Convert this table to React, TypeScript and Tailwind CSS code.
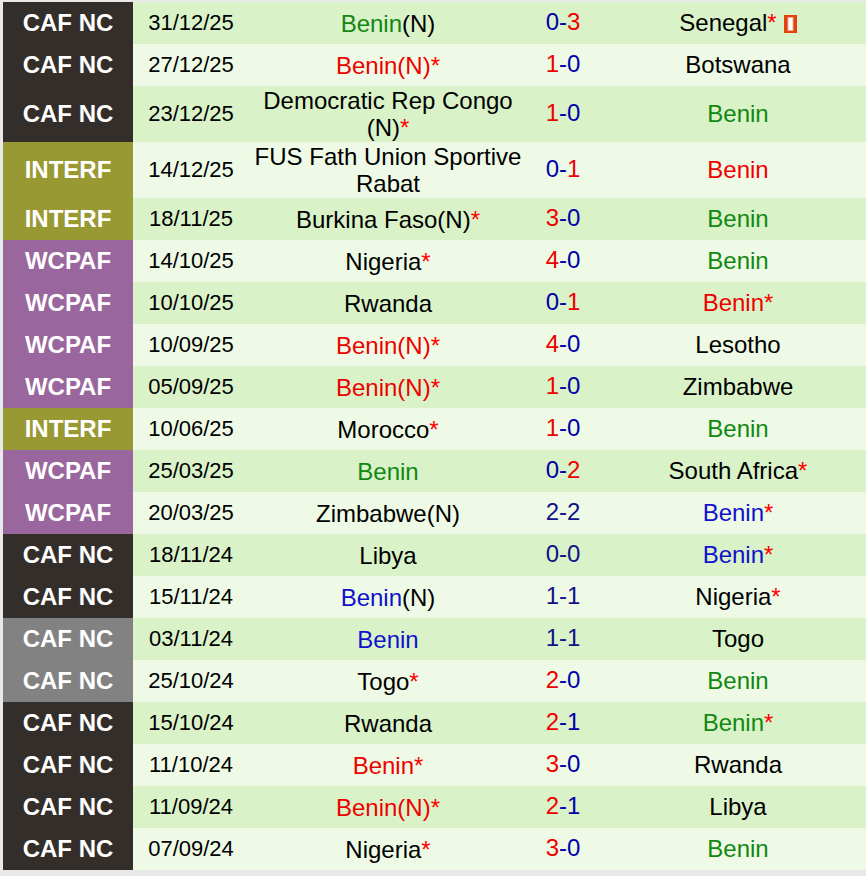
import React from 'react'

type Part = { t: string; c?: string }
type Row = {
  league: 'caf' | 'cafg' | 'interf' | 'wcpaf'
  date: string
  home: Part[]
  score: Part[]
  away: Part[]
  flag?: boolean
}

const G = 'text-[#118811]'
const R = 'text-[#ee0000]'
const B = 'text-[#1111cc]'
const S = 'text-[#ff0000]'
const SB = 'text-[#0000aa]'
const SR = 'text-[#ee0000]'
const SD = 'text-[#111188]'

const star: Part = { t: '*', c: S }

const leagues = {
  caf: { label: 'CAF NC', bg: 'bg-[#332e2a]' },
  cafg: { label: 'CAF NC', bg: 'bg-[#828282]' },
  interf: { label: 'INTERF', bg: 'bg-[#999933]' },
  wcpaf: { label: 'WCPAF', bg: 'bg-[#9a669e]' },
}

const rows: Row[] = [
  { league: 'caf', date: '31/12/25', home: [{ t: 'Benin', c: G }, { t: '(N)' }], score: [{ t: '0-', c: SB }, { t: '3', c: SR }], away: [{ t: 'Senegal' }, star], flag: true },
  { league: 'caf', date: '27/12/25', home: [{ t: 'Benin(N)', c: R }, star], score: [{ t: '1', c: SR }, { t: '-0', c: SB }], away: [{ t: 'Botswana' }] },
  { league: 'caf', date: '23/12/25', home: [{ t: 'Democratic Rep Congo (N)' }, star], score: [{ t: '1', c: SR }, { t: '-0', c: SB }], away: [{ t: 'Benin', c: G }] },
  { league: 'interf', date: '14/12/25', home: [{ t: 'FUS Fath Union Sportive Rabat' }], score: [{ t: '0-', c: SB }, { t: '1', c: SR }], away: [{ t: 'Benin', c: R }] },
  { league: 'interf', date: '18/11/25', home: [{ t: 'Burkina Faso(N)' }, star], score: [{ t: '3', c: SR }, { t: '-0', c: SB }], away: [{ t: 'Benin', c: G }] },
  { league: 'wcpaf', date: '14/10/25', home: [{ t: 'Nigeria' }, star], score: [{ t: '4', c: SR }, { t: '-0', c: SB }], away: [{ t: 'Benin', c: G }] },
  { league: 'wcpaf', date: '10/10/25', home: [{ t: 'Rwanda' }], score: [{ t: '0-', c: SB }, { t: '1', c: SR }], away: [{ t: 'Benin', c: R }, star] },
  { league: 'wcpaf', date: '10/09/25', home: [{ t: 'Benin(N)', c: R }, star], score: [{ t: '4', c: SR }, { t: '-0', c: SB }], away: [{ t: 'Lesotho' }] },
  { league: 'wcpaf', date: '05/09/25', home: [{ t: 'Benin(N)', c: R }, star], score: [{ t: '1', c: SR }, { t: '-0', c: SB }], away: [{ t: 'Zimbabwe' }] },
  { league: 'interf', date: '10/06/25', home: [{ t: 'Morocco' }, star], score: [{ t: '1', c: SR }, { t: '-0', c: SB }], away: [{ t: 'Benin', c: G }] },
  { league: 'wcpaf', date: '25/03/25', home: [{ t: 'Benin', c: G }], score: [{ t: '0-', c: SB }, { t: '2', c: SR }], away: [{ t: 'South Africa' }, star] },
  { league: 'wcpaf', date: '20/03/25', home: [{ t: 'Zimbabwe(N)' }], score: [{ t: '2-2', c: SD }], away: [{ t: 'Benin', c: B }, star] },
  { league: 'caf', date: '18/11/24', home: [{ t: 'Libya' }], score: [{ t: '0-0', c: SD }], away: [{ t: 'Benin', c: B }, star] },
  { league: 'caf', date: '15/11/24', home: [{ t: 'Benin', c: B }, { t: '(N)' }], score: [{ t: '1-1', c: SD }], away: [{ t: 'Nigeria' }, star] },
  { league: 'cafg', date: '03/11/24', home: [{ t: 'Benin', c: B }], score: [{ t: '1-1', c: SD }], away: [{ t: 'Togo' }] },
  { league: 'cafg', date: '25/10/24', home: [{ t: 'Togo' }, star], score: [{ t: '2', c: SR }, { t: '-0', c: SB }], away: [{ t: 'Benin', c: G }] },
  { league: 'caf', date: '15/10/24', home: [{ t: 'Rwanda' }], score: [{ t: '2', c: SR }, { t: '-1', c: SB }], away: [{ t: 'Benin', c: G }, star] },
  { league: 'caf', date: '11/10/24', home: [{ t: 'Benin', c: R }, star], score: [{ t: '3', c: SR }, { t: '-0', c: SB }], away: [{ t: 'Rwanda' }] },
  { league: 'caf', date: '11/09/24', home: [{ t: 'Benin(N)', c: R }, star], score: [{ t: '2', c: SR }, { t: '-1', c: SB }], away: [{ t: 'Libya' }] },
  { league: 'caf', date: '07/09/24', home: [{ t: 'Nigeria' }, star], score: [{ t: '3', c: SR }, { t: '-0', c: SB }], away: [{ t: 'Benin', c: G }] },
]

function Parts({ parts }: { parts: Part[] }) {
  return (
    <>
      {parts.map((p, i) => (
        <span key={i} className={p.c ?? 'text-black'}>
          {p.t}
        </span>
      ))}
    </>
  )
}

// small red-card style marker shown after the team name
function Flag() {
  return (
    <svg width="13" height="18" viewBox="0 0 13 18" className="ml-[7px] inline-block align-[-2px]">
      <rect x="0" y="0" width="13" height="18" fill="#e3400c" />
      <rect x="3.5" y="2" width="6" height="14" fill="#f6ad98" />
      <rect x="4.5" y="3" width="4" height="12" fill="#ffffff" />
    </svg>
  )
}

export default function App() {
  return (
    <div
      className="h-[876px] w-[866px] overflow-hidden bg-[#e9e9e9] pl-[3px] pt-[2px]"
      style={{ fontFamily: '"Liberation Sans", Arial, sans-serif' }}
    >
      <div className="flex w-[874px] flex-col">
        {rows.map((r, i) => {
          const lg = leagues[r.league]
          const rowBg = i % 2 === 0 ? 'bg-[#d9f2c8]' : 'bg-[#eefae5]'
          return (
            <div key={i} className={`flex min-h-[42px] ${rowBg}`}>
              <div className={`flex w-[130px] shrink-0 items-center justify-center pb-px text-[24px] font-bold text-white ${lg.bg}`}>
                {lg.label}
              </div>
              <div className="flex w-[116px] shrink-0 items-center justify-center pb-[2px] text-[22px] text-black">
                {r.date}
              </div>
              <div className="flex w-[278px] shrink-0 items-center justify-center px-1 py-px text-center text-[24px] leading-[27px]">
                <div>
                  <Parts parts={r.home} />
                </div>
              </div>
              <div className="flex w-[72px] shrink-0 items-center justify-center pb-[2px] text-[24px]">
                <div>
                  <Parts parts={r.score} />
                </div>
              </div>
              <div className="flex w-[278px] shrink-0 items-center justify-center px-1 text-center text-[24px] leading-[27px]">
                <div className="pb-[2px]">
                  <Parts parts={r.away} />
                  {r.flag && <Flag />}
                </div>
              </div>
            </div>
          )
        })}
      </div>
    </div>
  )
}
